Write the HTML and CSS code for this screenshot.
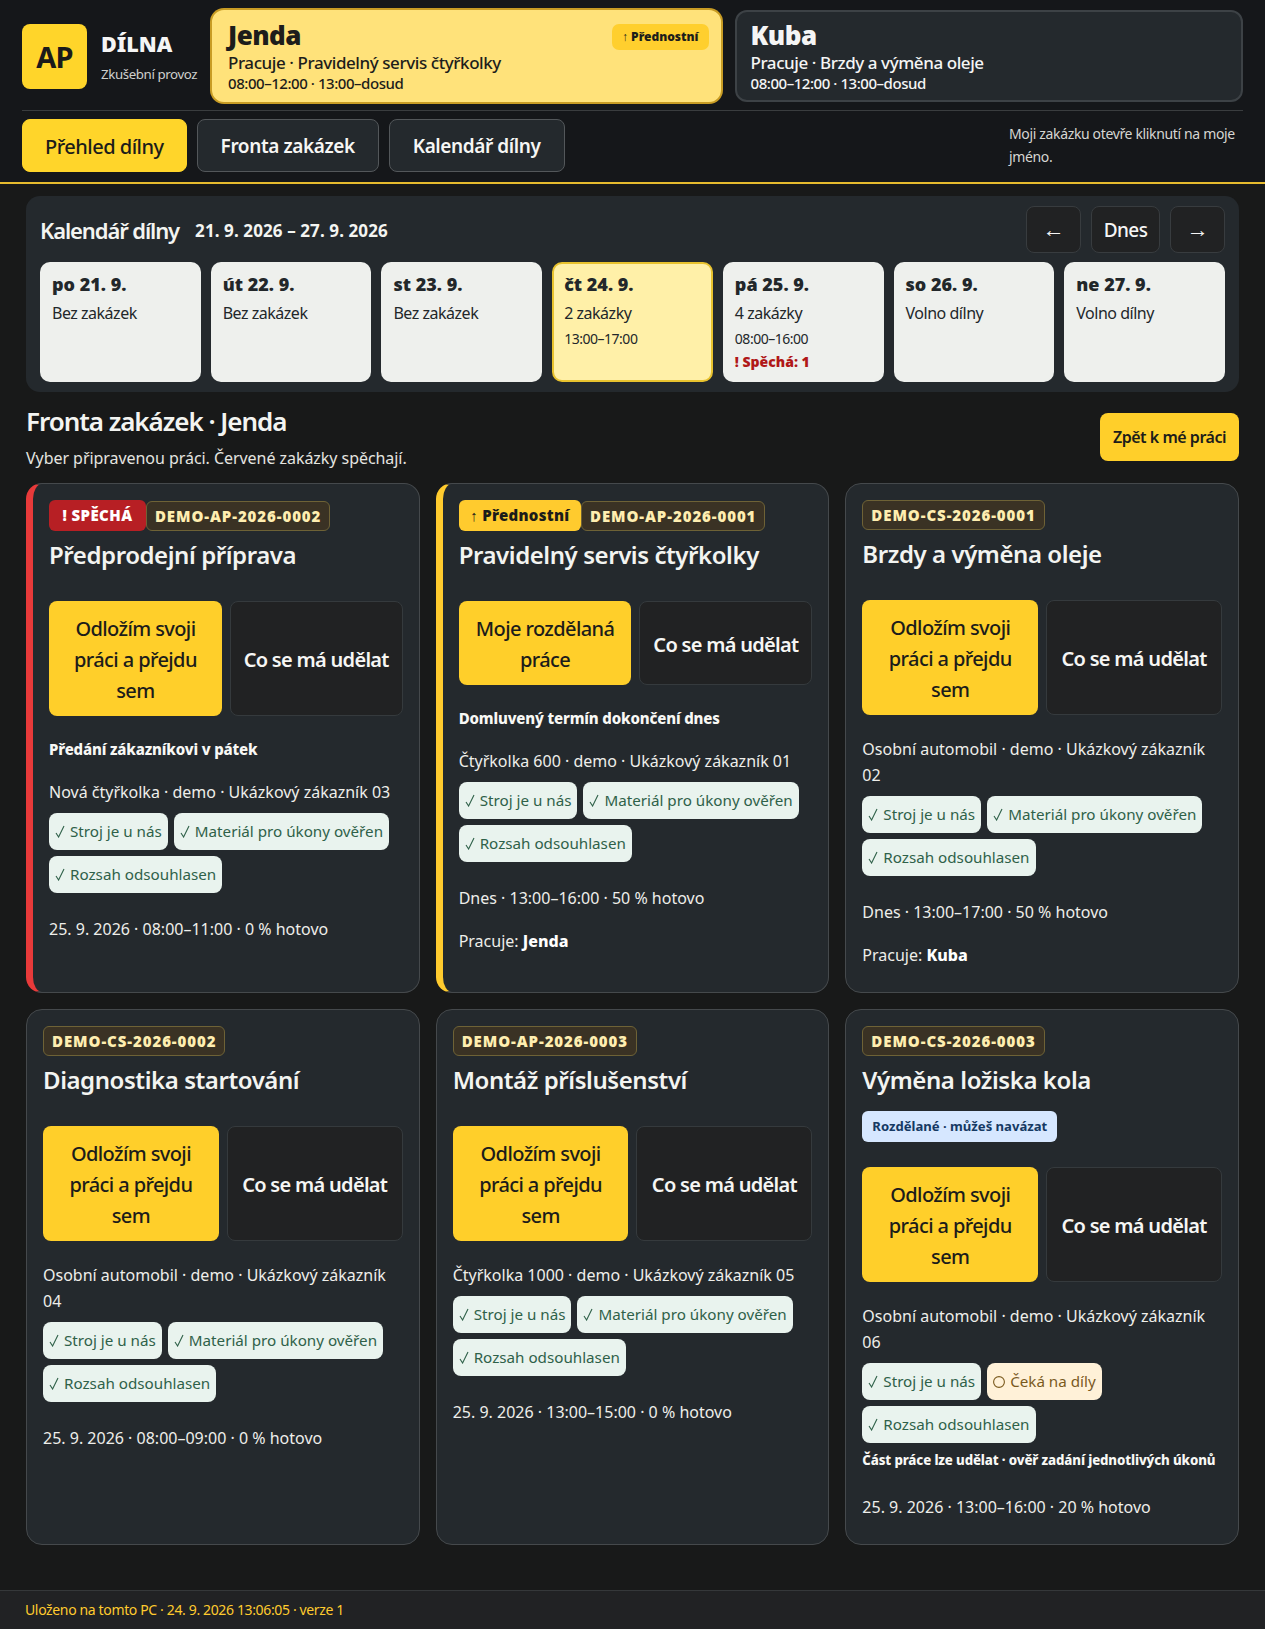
FILE: index.html
```html
<!DOCTYPE html>
<html lang="cs">
<head>
<meta charset="utf-8">
<title>Dílna</title>
<link rel="stylesheet" href="styles.css">
</head>
<body>
<header class="topbar">
  <div class="toprow">
    <div class="brand">
      <div class="logo">AP</div>
      <div class="brand-text">
        <div class="brand-name">DÍLNA</div>
        <div class="brand-sub">Zkušební provoz</div>
      </div>
    </div>
    <div class="workers">
      <div class="worker worker-active">
        <div class="worker-name">Jenda</div>
        <div class="worker-job">Pracuje · Pravidelný servis čtyřkolky</div>
        <div class="worker-time">08:00–12:00 · 13:00–dosud</div>
        <span class="worker-flag">↑ Přednostní</span>
      </div>
      <div class="worker">
        <div class="worker-name">Kuba</div>
        <div class="worker-job">Pracuje · Brzdy a výměna oleje</div>
        <div class="worker-time">08:00–12:00 · 13:00–dosud</div>
      </div>
    </div>
  </div>
  <div class="navrow">
    <nav class="nav">
      <a class="nav-btn nav-btn-active">Přehled dílny</a>
      <a class="nav-btn">Fronta zakázek</a>
      <a class="nav-btn">Kalendář dílny</a>
    </nav>
    <p class="nav-note">Moji zakázku otevře kliknutí na moje jméno.</p>
  </div>
</header>

<main class="main">
  <section class="calendar">
    <div class="cal-head">
      <h2 class="cal-title">Kalendář dílny</h2>
      <span class="cal-range">21. 9. 2026 – 27. 9. 2026</span>
      <div class="cal-ctrl">
        <button class="ctrl ctrl-arrow">←</button>
        <button class="ctrl ctrl-today">Dnes</button>
        <button class="ctrl ctrl-arrow">→</button>
      </div>
    </div>
    <div class="days">
      <div class="day"><div class="day-name">po 21. 9.</div><div class="day-info">Bez zakázek</div></div>
      <div class="day"><div class="day-name">út 22. 9.</div><div class="day-info">Bez zakázek</div></div>
      <div class="day"><div class="day-name">st 23. 9.</div><div class="day-info">Bez zakázek</div></div>
      <div class="day day-today"><div class="day-name">čt 24. 9.</div><div class="day-info">2 zakázky</div><div class="day-time">13:00–17:00</div></div>
      <div class="day"><div class="day-name">pá 25. 9.</div><div class="day-info">4 zakázky</div><div class="day-time">08:00–16:00</div><div class="day-urgent">! Spěchá: 1</div></div>
      <div class="day"><div class="day-name">so 26. 9.</div><div class="day-info">Volno dílny</div></div>
      <div class="day"><div class="day-name">ne 27. 9.</div><div class="day-info">Volno dílny</div></div>
    </div>
  </section>

  <section class="queue-head">
    <div>
      <h1 class="queue-title">Fronta zakázek · Jenda</h1>
      <p class="queue-sub">Vyber připravenou práci. Červené zakázky spěchají.</p>
    </div>
    <button class="back-btn">Zpět k mé práci</button>
  </section>

  <section class="jobs">
    <article class="job job-urgent">
      <div class="tags"><span class="tag tag-urgent">! SPĚCHÁ</span><span class="tag tag-code">DEMO-AP-2026-0002</span></div>
      <h3 class="job-title">Předprodejní příprava</h3>
      <div class="actions"><button class="act act-main">Odložím svoji práci a přejdu sem</button><button class="act act-alt">Co se má udělat</button></div>
      <p class="line line-strong">Předání zákazníkovi v pátek</p>
      <p class="line">Nová čtyřkolka · demo · Ukázkový zákazník 03</p>
      <div class="pills">
        <span class="pill"><svg class="ico" viewBox="0 0 10 13"><path d="M1 8l2.6 4L9 1"/></svg>Stroj je u nás</span>
        <span class="pill"><svg class="ico" viewBox="0 0 10 13"><path d="M1 8l2.6 4L9 1"/></svg>Materiál pro úkony ověřen</span>
        <span class="pill"><svg class="ico" viewBox="0 0 10 13"><path d="M1 8l2.6 4L9 1"/></svg>Rozsah odsouhlasen</span>
      </div>
      <p class="line line-after">25. 9. 2026 · 08:00–11:00 · 0 % hotovo</p>
    </article>

    <article class="job job-priority">
      <div class="tags"><span class="tag tag-priority">↑ Přednostní</span><span class="tag tag-code">DEMO-AP-2026-0001</span></div>
      <h3 class="job-title">Pravidelný servis čtyřkolky</h3>
      <div class="actions"><button class="act act-main">Moje rozdělaná práce</button><button class="act act-alt">Co se má udělat</button></div>
      <p class="line line-strong">Domluvený termín dokončení dnes</p>
      <p class="line">Čtyřkolka 600 · demo · Ukázkový zákazník 01</p>
      <div class="pills">
        <span class="pill"><svg class="ico" viewBox="0 0 10 13"><path d="M1 8l2.6 4L9 1"/></svg>Stroj je u nás</span>
        <span class="pill"><svg class="ico" viewBox="0 0 10 13"><path d="M1 8l2.6 4L9 1"/></svg>Materiál pro úkony ověřen</span>
        <span class="pill"><svg class="ico" viewBox="0 0 10 13"><path d="M1 8l2.6 4L9 1"/></svg>Rozsah odsouhlasen</span>
      </div>
      <p class="line line-after">Dnes · 13:00–16:00 · 50 % hotovo</p>
      <p class="line">Pracuje: <b class="who">Jenda</b></p>
    </article>

    <article class="job">
      <div class="tags"><span class="tag tag-code">DEMO-CS-2026-0001</span></div>
      <h3 class="job-title">Brzdy a výměna oleje</h3>
      <div class="actions"><button class="act act-main">Odložím svoji práci a přejdu sem</button><button class="act act-alt">Co se má udělat</button></div>
      <p class="line line-first">Osobní automobil · demo · Ukázkový zákazník 02</p>
      <div class="pills">
        <span class="pill"><svg class="ico" viewBox="0 0 10 13"><path d="M1 8l2.6 4L9 1"/></svg>Stroj je u nás</span>
        <span class="pill"><svg class="ico" viewBox="0 0 10 13"><path d="M1 8l2.6 4L9 1"/></svg>Materiál pro úkony ověřen</span>
        <span class="pill"><svg class="ico" viewBox="0 0 10 13"><path d="M1 8l2.6 4L9 1"/></svg>Rozsah odsouhlasen</span>
      </div>
      <p class="line line-after">Dnes · 13:00–17:00 · 50 % hotovo</p>
      <p class="line">Pracuje: <b class="who">Kuba</b></p>
    </article>

    <article class="job">
      <div class="tags"><span class="tag tag-code">DEMO-CS-2026-0002</span></div>
      <h3 class="job-title">Diagnostika startování</h3>
      <div class="actions"><button class="act act-main">Odložím svoji práci a přejdu sem</button><button class="act act-alt">Co se má udělat</button></div>
      <p class="line line-first">Osobní automobil · demo · Ukázkový zákazník 04</p>
      <div class="pills">
        <span class="pill"><svg class="ico" viewBox="0 0 10 13"><path d="M1 8l2.6 4L9 1"/></svg>Stroj je u nás</span>
        <span class="pill"><svg class="ico" viewBox="0 0 10 13"><path d="M1 8l2.6 4L9 1"/></svg>Materiál pro úkony ověřen</span>
        <span class="pill"><svg class="ico" viewBox="0 0 10 13"><path d="M1 8l2.6 4L9 1"/></svg>Rozsah odsouhlasen</span>
      </div>
      <p class="line line-after">25. 9. 2026 · 08:00–09:00 · 0 % hotovo</p>
    </article>

    <article class="job">
      <div class="tags"><span class="tag tag-code">DEMO-AP-2026-0003</span></div>
      <h3 class="job-title">Montáž příslušenství</h3>
      <div class="actions"><button class="act act-main">Odložím svoji práci a přejdu sem</button><button class="act act-alt">Co se má udělat</button></div>
      <p class="line line-first">Čtyřkolka 1000 · demo · Ukázkový zákazník 05</p>
      <div class="pills">
        <span class="pill"><svg class="ico" viewBox="0 0 10 13"><path d="M1 8l2.6 4L9 1"/></svg>Stroj je u nás</span>
        <span class="pill"><svg class="ico" viewBox="0 0 10 13"><path d="M1 8l2.6 4L9 1"/></svg>Materiál pro úkony ověřen</span>
        <span class="pill"><svg class="ico" viewBox="0 0 10 13"><path d="M1 8l2.6 4L9 1"/></svg>Rozsah odsouhlasen</span>
      </div>
      <p class="line line-after">25. 9. 2026 · 13:00–15:00 · 0 % hotovo</p>
    </article>

    <article class="job">
      <div class="tags"><span class="tag tag-code">DEMO-CS-2026-0003</span></div>
      <h3 class="job-title">Výměna ložiska kola</h3>
      <span class="badge">Rozdělané · můžeš navázat</span>
      <div class="actions"><button class="act act-main">Odložím svoji práci a přejdu sem</button><button class="act act-alt">Co se má udělat</button></div>
      <p class="line line-first">Osobní automobil · demo · Ukázkový zákazník 06</p>
      <div class="pills">
        <span class="pill"><svg class="ico" viewBox="0 0 10 13"><path d="M1 8l2.6 4L9 1"/></svg>Stroj je u nás</span>
        <span class="pill pill-wait"><svg class="ico ico-wait" viewBox="0 0 12 12"><circle cx="6" cy="6" r="5.4"/></svg>Čeká na díly</span>
        <span class="pill"><svg class="ico" viewBox="0 0 10 13"><path d="M1 8l2.6 4L9 1"/></svg>Rozsah odsouhlasen</span>
      </div>
      <p class="line-note">Část práce lze udělat · ověř zadání jednotlivých úkonů</p>
      <p class="line line-after">25. 9. 2026 · 13:00–16:00 · 20 % hotovo</p>
    </article>
  </section>
</main>

<footer class="footer">Uloženo na tomto PC · 24. 9. 2026 13:06:05 · verze 1</footer>
</body>
</html>
```

FILE: styles.css
```css
* { box-sizing: border-box; }
html, body { margin: 0; padding: 0; }
body {
  display: flex;
  flex-direction: column;
  min-height: 100vh;
  background: #181919;
  color: #f3f4f1;
  font-family: "Noto Sans", "Open Sans", sans-serif;
  font-size: 16px;
  line-height: 25px;
}
button { font-family: inherit; cursor: pointer; }
p, h1, h2, h3 { margin: 0; }

/* top bar */
.topbar {
  background: #15171a;
  border-bottom: 2px solid #e6bb2e;
  padding: 10px 22px 10px;
}
.toprow {
  display: flex;
  gap: 14px;
  padding-bottom: 8px;
  border-bottom: 1px solid #3a3d3f;
}
.brand { display: flex; align-items: center; gap: 14px; width: 176px; flex: none; }
.logo {
  width: 65px;
  height: 65px;
  flex: none;
  border-radius: 8px;
  background: #ffd52a;
  color: #1a1a1a;
  font-size: 29px;
  font-weight: 700;
  letter-spacing: -0.03em;
  display: flex;
  align-items: center;
  justify-content: center;
  margin-top: 1px;
}
.brand-name { font-size: 21.5px; font-weight: 900; line-height: 30px; margin-top: 1px; color: #f5f5f5; }
.brand-sub { font-size: 13.3px; line-height: 20px; margin-top: 5px; color: #cfd0cd; white-space: nowrap; letter-spacing: -0.03em; }
.workers { flex: 1; display: grid; grid-template-columns: 1fr 1fr; gap: 14px; }
.worker {
  position: relative;
  height: 92px;
  padding: 8px 14px;
  background: #24292d;
  border: 2px solid #3d4246;
  border-radius: 12px;
  color: #f5f5f5;
}
.worker-active {
  background: #ffe27a;
  border-color: #ffe27a;
  box-shadow: 0 0 0 2px #c89c24;
  color: #1d1d1b;
}
.worker-name { font-size: 26px; font-weight: 900; line-height: 31px; letter-spacing: -0.02em; }
.worker-job { font-size: 17px; line-height: 23px; font-weight: 500; letter-spacing: -0.025em; }
.worker-time { font-size: 15px; line-height: 19px; font-weight: 500; letter-spacing: -0.03em; }
.worker-flag {
  position: absolute;
  top: 12px;
  right: 10px;
  height: 26px;
  padding: 0 10px;
  border-radius: 7px;
  background: #ffcf2e;
  font-size: 12px;
  line-height: 26px;
  font-weight: 900;
}
.navrow { display: flex; align-items: flex-start; justify-content: space-between; padding-top: 8px; }
.nav { display: flex; gap: 10px; }
.nav-btn {
  height: 53px;
  line-height: 53px;
  padding: 0 23px;
  border: 1px solid #53575a;
  border-radius: 8px;
  background: #24292d;
  color: #f6f6f4;
  font-size: 19px;
  font-weight: 600;
  letter-spacing: -0.4px;
}
.nav-btn-active { background: #ffd52a; border-color: #ffd52a; color: #1c1c1a; font-weight: 500; font-size: 20px; letter-spacing: -0.5px; padding: 0 22px; }
.nav-note {
  width: 234px;
  padding-top: 3px;
  font-size: 14px;
  line-height: 23px;
  color: #d6d6d2;
  letter-spacing: -0.025em;
}

/* calendar */
.main { flex: 1; padding: 12px 26px 45px; }
.calendar { background: #24292d; border-radius: 14px; padding: 10px 14px; }
.cal-head { display: flex; align-items: center; gap: 16px; margin-bottom: 9px; }
.cal-title { font-size: 22px; font-weight: 600; line-height: 45px; letter-spacing: -0.05em; padding-top: 2px; }
.cal-range { font-size: 17px; font-weight: 700; letter-spacing: 0.1px; padding-top: 2px; }
.cal-ctrl { margin-left: auto; display: flex; gap: 10px; }
.ctrl {
  height: 47px;
  border: 1px solid #383c3f;
  border-radius: 8px;
  background: #212223;
  color: #f5f5f5;
  font-size: 19px;
  font-weight: 500;
  letter-spacing: -0.03em;
  padding: 0;
}
.ctrl-arrow { width: 55px; font-family: "Liberation Sans", sans-serif; font-size: 22px; font-weight: 400; line-height: 20px; }
.ctrl-today { width: 69px; }
.days { display: grid; grid-template-columns: repeat(7, 1fr); gap: 10px; }
.day {
  height: 120px;
  padding: 9px 12px;
  background: #eef0ed;
  border-radius: 10px;
  color: #22272a;
  letter-spacing: -0.03em;
}
.day-today { background: #fff0a8; border: 2px solid #e8c22e; padding: 7px 10px; }
.day-name { font-size: 18px; line-height: 26px; font-weight: 900; letter-spacing: 0; }
.day-info { font-size: 16px; line-height: 25px; margin-top: 4px; }
.day-time { font-size: 14px; line-height: 22px; margin-top: 2px; }
.day-urgent { font-size: 14px; line-height: 22px; font-weight: 900; color: #b01818; margin-top: 1px; letter-spacing: 0; }

/* queue heading */
.queue-head { display: flex; justify-content: space-between; align-items: flex-start; margin: 13px 0 12px; }
.queue-title { font-size: 26px; font-weight: 600; line-height: 32px; letter-spacing: -0.04em; }
.queue-sub { margin-top: 9px; font-size: 16px; line-height: 25px; color: #e5e5e0; letter-spacing: -0.05px; }
.back-btn {
  height: 48px;
  width: 139px;
  margin-top: 8px;
  border: 0;
  padding: 0;
  border-radius: 8px;
  background: #ffcf2a;
  color: #1c1c1a;
  font-size: 16px;
  font-weight: 600;
  letter-spacing: -0.03em;
}

/* job cards */
.jobs { display: grid; grid-template-columns: repeat(3, minmax(0, 1fr)); gap: 16px; }
.job {
  display: flex;
  flex-direction: column;
  align-items: stretch;
  background: #24292d;
  border: 1px solid #45494c;
  border-radius: 16px;
  padding: 16px 16px 24px;
}
.job-urgent { border-left: 7px solid #e83a3a; }
.job-priority { border-left: 7px solid #ffcb2e; }
.tags { display: flex; align-items: center; }
.tag {
  display: block;
  height: 30px;
  padding: 0 8px;
  border-radius: 6px;
  font-size: 15px;
  line-height: 28px;
  font-weight: 900;
  letter-spacing: 0.92px;
  white-space: nowrap;
}
.tag-code { background: #3a3224; border: 1px solid #6e6236; color: #ffeeb0; }
.tag-urgent { background: #b71f24; color: #fff; height: 31px; line-height: 31px; padding: 0 13.5px; letter-spacing: 0.4px; }
.tag-priority { background: #ffcb2e; color: #1c1c1a; height: 31px; line-height: 31px; padding: 0 11.5px; letter-spacing: 0.3px; }
.job-title { margin: 6px 0 13px; font-size: 24px; line-height: 36px; font-weight: 600; letter-spacing: -0.43px; }
.badge {
  align-self: flex-start;
  height: 31px;
  line-height: 31px;
  padding: 0 10px;
  margin-bottom: 10px;
  border-radius: 6px;
  background: #d6e7ff;
  color: #153963;
  font-size: 13.1px;
  font-weight: 700;
}
.actions { display: grid; grid-template-columns: 1fr 1fr; gap: 8px; margin-top: 15px; }
.act {
  padding: 12px 11px 10px;
  border-radius: 8px;
  font-size: 20px;
  line-height: 31px;
  font-weight: 500;
  letter-spacing: -0.6px;
}
.act-main { background: #ffcf2a; border: 0; color: #1c1c1a; }
.act-alt { background: #212223; border: 1px solid #353a3d; color: #f6f6f4; font-weight: 600; letter-spacing: -0.7px; }
.line { margin-top: 18px; color: #eeeeea; }
.line-strong { margin-top: 21px; font-weight: 800; color: #f8f8f5; letter-spacing: -0.01em; font-size: 15px; }
.line-first { margin-top: 21px; line-height: 26px; }
.line-after { margin-top: 24px; }
.who { font-weight: 800; color: #fff; }
.pills { display: flex; flex-wrap: wrap; gap: 6px; margin-top: 8px; }
.pill {
  display: flex;
  align-items: center;
  gap: 5px;
  height: 37px;
  padding: 6px;
  border-radius: 8px;
  background: #e9f3ee;
  color: #2f6149;
  font-size: 15.2px;
  white-space: nowrap;
}
.ico { width: 10px; height: 13px; fill: none; stroke: currentColor; stroke-width: 1.1; flex: none; }
.ico-wait { width: 12px; height: 12px; }
.pill-wait { background: #fff1d8; color: #7a5a1e; }
.line-note { margin-top: 6px; font-size: 13.25px; line-height: 22px; font-weight: 800; color: #f8f8f5; letter-spacing: -0.01em; white-space: nowrap; }

.footer {
  height: 39px;
  padding: 0 25px;
  background: #212224;
  border-top: 1px solid #35383a;
  color: #ffcb2e;
  font-size: 14px;
  line-height: 38px;
  letter-spacing: -0.36px;
}
```
